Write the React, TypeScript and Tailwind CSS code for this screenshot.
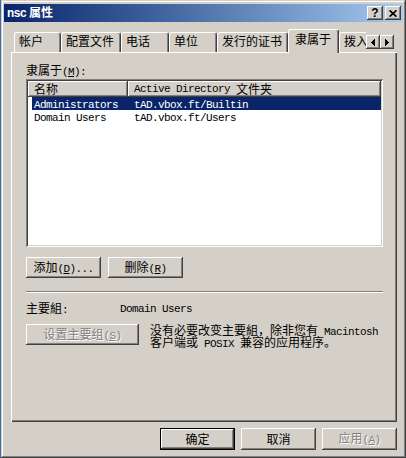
import type { ReactNode } from 'react';

// classic 3D edges
const raised =
  'shadow-[inset_-1px_-1px_#404040,inset_1px_1px_#ffffff,inset_-2px_-2px_#808080,inset_2px_2px_#d4d0c8]';
const sunken =
  'shadow-[inset_1px_1px_#808080,inset_-1px_-1px_#ffffff,inset_2px_2px_#404040,inset_-2px_-2px_#d4d0c8]';
const greyed = 'text-[#808080] [text-shadow:1px_1px_0_#ffffff]';

function L({ children }: { children: ReactNode }) {
  return (
    <span className="font-['Liberation_Mono',monospace] text-[11px] tracking-[-0.6px]">{children}</span>
  );
}

function Key({ k }: { k: string }) {
  return (
    <L>
      (<u className="underline-offset-1">{k}</u>)
    </L>
  );
}

function Tab({ label, width, active }: { label: string; width: string; active?: boolean }) {
  if (active) {
    return (
      <div
        className={`relative z-10 -mb-[1px] h-[24px] shrink-0 rounded-t-[3px] border-l border-r border-t border-white border-r-[#404040] bg-[#d4d0c8] pl-[6px] pt-[3px] shadow-[inset_-1px_0_#808080] ${width}`}
      >
        {label}
      </div>
    );
  }
  return (
    <div
      className={`h-[20px] shrink-0 rounded-t-[3px] border-l border-r border-t border-white border-r-[#404040] bg-[#d4d0c8] pl-[4px] pt-[2px] shadow-[inset_-1px_0_#808080] ${width}`}
    >
      {label}
    </div>
  );
}

function Arrow({ dir }: { dir: 'left' | 'right' }) {
  return (
    <div className={`flex h-[14px] w-[14px] items-center justify-center bg-[#d4d0c8] ${raised}`}>
      <svg width="4" height="7" viewBox="0 0 4 7" shapeRendering="crispEdges">
        {dir === 'left' ? <polygon points="4,0 4,7 0,3.5" fill="#000" /> : <polygon points="0,0 0,7 4,3.5" fill="#000" />}
      </svg>
    </div>
  );
}

function Button({
  children,
  className,
  disabled,
  isDefault,
}: {
  children: ReactNode;
  className: string;
  disabled?: boolean;
  isDefault?: boolean;
}) {
  return (
    <div
      className={`flex shrink-0 items-center justify-center bg-[#d4d0c8] ${isDefault ? 'border border-black' : ''} ${raised} ${disabled ? greyed : ''} ${className}`}
    >
      <span className="whitespace-nowrap">{children}</span>
    </div>
  );
}

export default function App() {
  return (
    <div className="flex h-[458px] w-[406px] bg-[#3a6ea5] pl-[1px] font-['Noto_Sans_CJK_SC',sans-serif] text-[12px] leading-[12px] text-black">
      <div className="flex h-full w-[405px] flex-col bg-[#d4d0c8] px-[3px] pb-[3px] pt-[4px] shadow-[inset_-1px_-1px_#404040,inset_1px_1px_#d4d0c8,inset_-2px_-2px_#808080,inset_2px_2px_#ffffff]">
        {/* title bar */}
        <div className="flex h-[18px] shrink-0 items-center bg-linear-to-r from-[#0a246a] to-[#a6caf0] pl-[3px] pr-[2px]">
          <span className="font-bold text-white">
            <span className="font-['Liberation_Mono',monospace] text-[12px] tracking-[-0.8px]">nsc</span> 属性
          </span>
          <div className="ml-auto flex gap-[2px]">
            <div className={`flex h-[14px] w-[16px] items-center justify-center bg-[#d4d0c8] ${raised}`}>
              <span className="font-['Liberation_Sans',sans-serif] text-[12px] font-bold leading-none">?</span>
            </div>
            <div className={`flex h-[14px] w-[16px] items-center justify-center bg-[#d4d0c8] ${raised}`}>
              <svg width="8" height="7" viewBox="0 0 8 7">
                <path d="M0.6 0.4L7.4 6.6M7.4 0.4L0.6 6.6" stroke="#000" strokeWidth="1.7" />
              </svg>
            </div>
          </div>
        </div>

        {/* property sheet */}
        <div className="ml-[7px] mr-[6px] mt-[7px] flex flex-col">
          <div className="relative z-10 flex h-[23px] items-end">
            <div className="flex h-full min-w-0 flex-1 items-end overflow-x-clip pl-[3px]">
              <Tab label="帐户" width="w-[47px]" />
              <Tab label="配置文件" width="w-[60px]" />
              <Tab label="电话" width="w-[48px]" />
              <Tab label="单位" width="w-[48px]" />
              <Tab label="发行的证书" width="w-[71px]" />
              <Tab label="隶属于" width="w-[51px]" active />
              <Tab label="拨入" width="w-[48px]" />
            </div>
            <div className="mb-[3px] mr-[3px] flex shrink-0">
              <Arrow dir="left" />
              <Arrow dir="right" />
            </div>
          </div>

          <div className="flex h-[370px] flex-col pl-[15px] pr-[14px] pt-[12px] shadow-[inset_1px_1px_#ffffff,inset_-1px_-1px_#404040,inset_-2px_-2px_#808080]">
            <div className="h-[12px] whitespace-nowrap">
              隶属于<Key k="M" />
              <L>:</L>
            </div>

            {/* list view */}
            <div className={`mt-[3px] flex h-[168px] flex-col bg-white p-[2px] ${sunken}`}>
              <div className="flex h-[16px] shrink-0">
                <div className="flex w-[100px] items-center bg-[#d4d0c8] pl-[6px] shadow-[inset_-1px_-1px_#404040,inset_1px_1px_#ffffff,inset_-2px_-2px_#808080]">
                  名称
                </div>
                <div className="flex flex-1 items-center whitespace-pre bg-[#d4d0c8] pl-[6px] shadow-[inset_-1px_-1px_#404040,inset_1px_1px_#ffffff,inset_-2px_-2px_#808080]">
                  <L>{'Active Directory\u00a0'}</L>文件夹
                </div>
              </div>
              <div className="ml-[4px] flex h-[13px] items-center bg-[#0a246a] text-white">
                <div className="w-[100px] pl-[2px]">
                  <L>Administrators</L>
                </div>
                <div className="pl-[2px]">
                  <L>tAD.vbox.ft/Builtin</L>
                </div>
              </div>
              <div className="ml-[4px] flex h-[13px] items-center">
                <div className="w-[100px] pl-[2px]">
                  <L>Domain Users</L>
                </div>
                <div className="pl-[2px]">
                  <L>tAD.vbox.ft/Users</L>
                </div>
              </div>
            </div>

            <div className="mt-[10px] flex gap-[7px]">
              <Button className="h-[21px] w-[75px]">
                添加<Key k="D" />
                <L>...</L>
              </Button>
              <Button className="h-[21px] w-[75px]">
                删除<Key k="R" />
              </Button>
            </div>

            <div className="mt-[13px] h-[2px] border-b border-t border-b-white border-t-[#808080]" />

            <div className="mt-[10px] flex h-[12px] items-center">
              <div className="w-[94px]">
                主要組<L>:</L>
              </div>
              <L>Domain Users</L>
            </div>

            <div className="mt-[9px] flex">
              <Button className="h-[21px] w-[113px]" disabled>
                设置主要组<Key k="S" />
              </Button>
              <div className="ml-[11px] flex flex-col whitespace-nowrap">
                <div className="h-[12px]">
                  没有必要改变主要組，除非您有<L>{' Macintosh'}</L>
                </div>
                <div className="h-[12px]">
                  客户端或<L>{' POSIX '}</L>兼容的应用程序。
                </div>
              </div>
            </div>
          </div>
        </div>

        {/* dialog buttons */}
        <div className="mt-[6px] flex justify-end gap-[6px] pr-[6px]">
          <Button className="h-[22px] w-[75px]" isDefault>
            确定
          </Button>
          <Button className="h-[22px] w-[75px]">取消</Button>
          <Button className="h-[22px] w-[75px]" disabled>
            应用<Key k="A" />
          </Button>
        </div>
      </div>
    </div>
  );
}
